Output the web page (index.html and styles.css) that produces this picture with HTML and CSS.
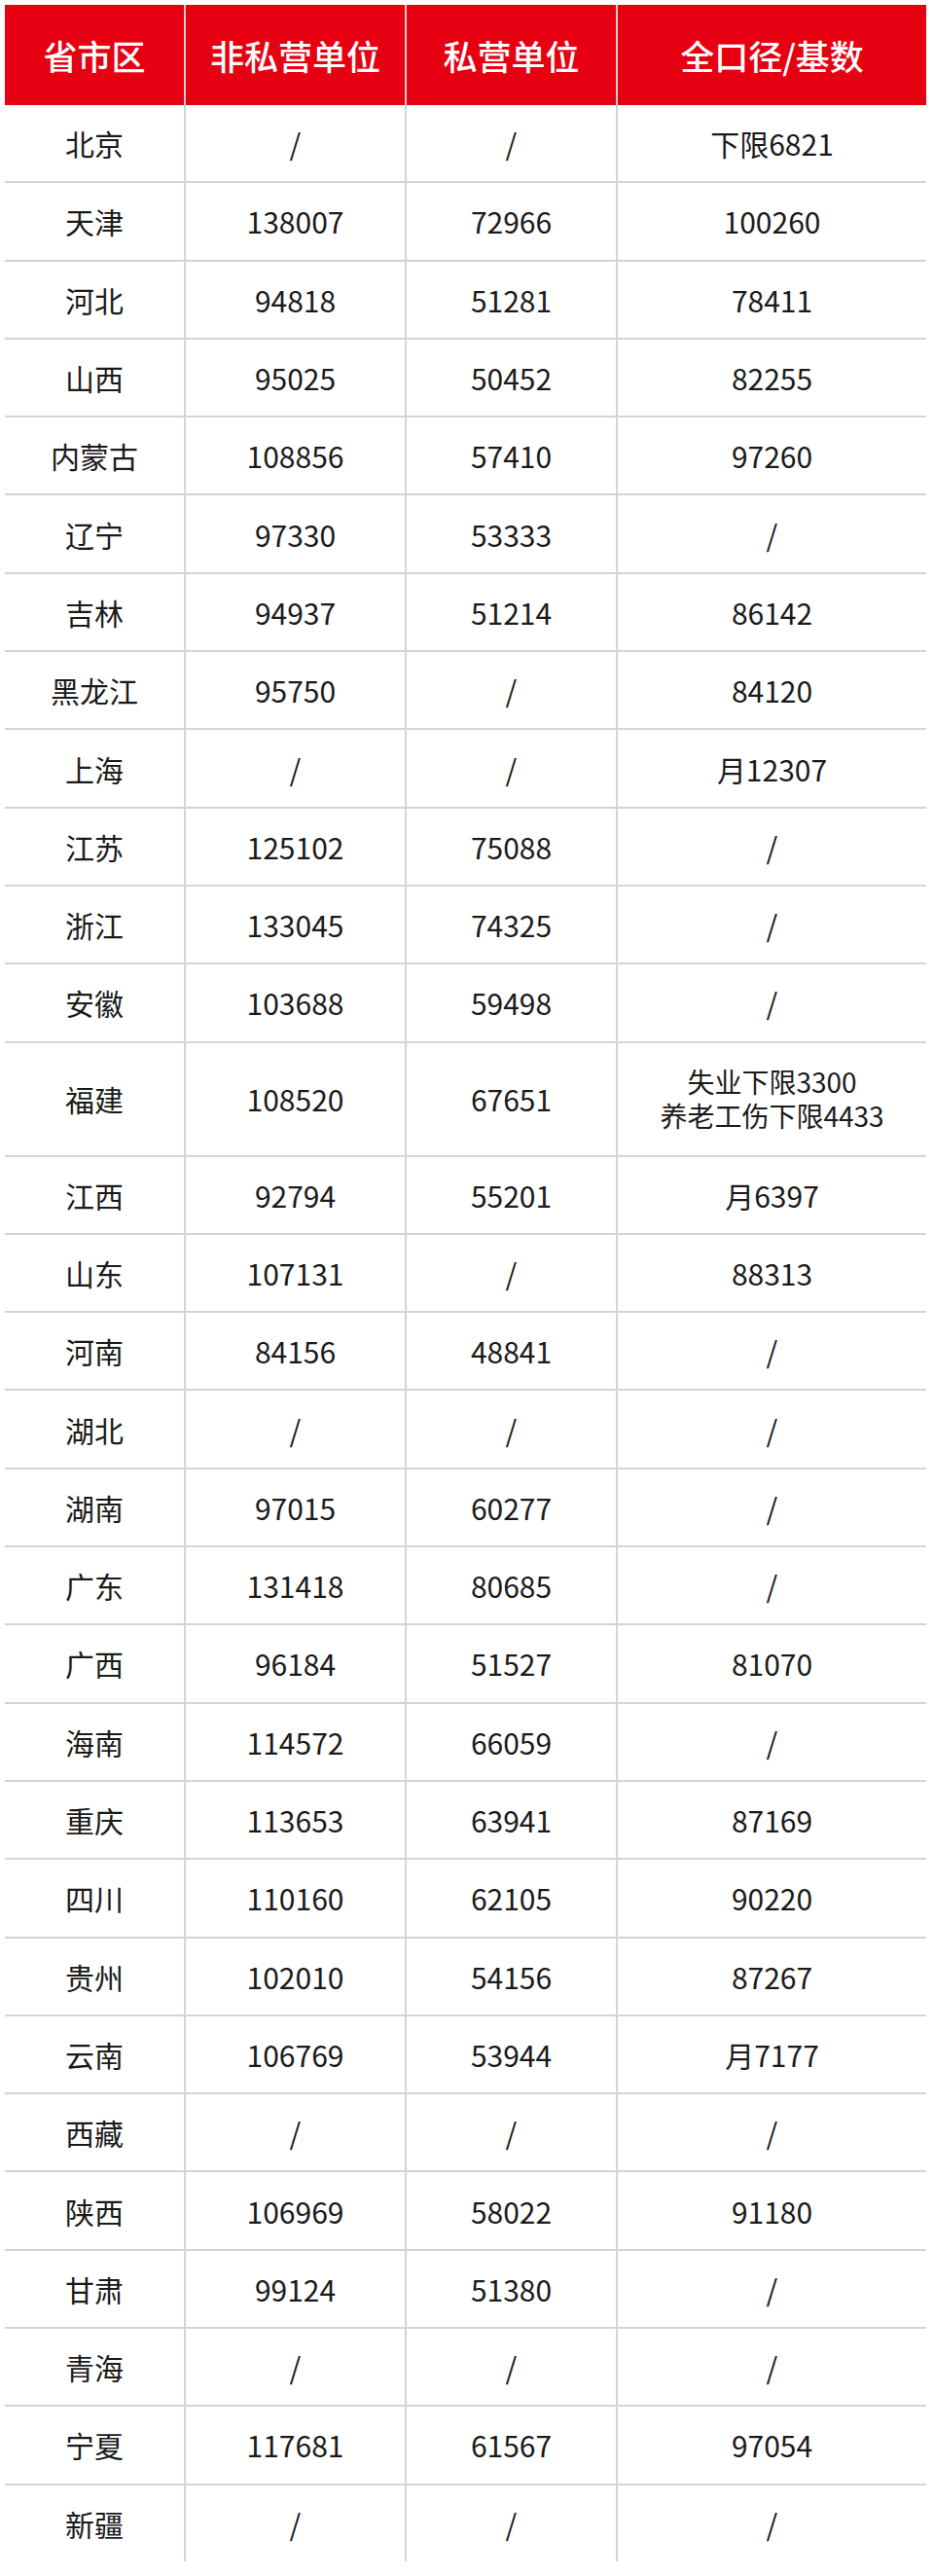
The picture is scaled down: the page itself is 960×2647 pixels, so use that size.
FILE: index.html
```html
<!DOCTYPE html>
<html lang="zh-CN">
<head>
<meta charset="utf-8">
<title>社保缴费基数</title>
<link rel="stylesheet" href="styles.css">
</head>
<body>
<div class="table">
  <div class="row head">
    <div class="cell">省市区</div>
    <div class="cell">非私营单位</div>
    <div class="cell">私营单位</div>
    <div class="cell">全口径/基数</div>
  </div>
  <div class="row"><div class="cell">北京</div><div class="cell">/</div><div class="cell">/</div><div class="cell">下限6821</div></div>
  <div class="row"><div class="cell">天津</div><div class="cell">138007</div><div class="cell">72966</div><div class="cell">100260</div></div>
  <div class="row"><div class="cell">河北</div><div class="cell">94818</div><div class="cell">51281</div><div class="cell">78411</div></div>
  <div class="row"><div class="cell">山西</div><div class="cell">95025</div><div class="cell">50452</div><div class="cell">82255</div></div>
  <div class="row"><div class="cell">内蒙古</div><div class="cell">108856</div><div class="cell">57410</div><div class="cell">97260</div></div>
  <div class="row"><div class="cell">辽宁</div><div class="cell">97330</div><div class="cell">53333</div><div class="cell">/</div></div>
  <div class="row"><div class="cell">吉林</div><div class="cell">94937</div><div class="cell">51214</div><div class="cell">86142</div></div>
  <div class="row"><div class="cell">黑龙江</div><div class="cell">95750</div><div class="cell">/</div><div class="cell">84120</div></div>
  <div class="row"><div class="cell">上海</div><div class="cell">/</div><div class="cell">/</div><div class="cell">月12307</div></div>
  <div class="row"><div class="cell">江苏</div><div class="cell">125102</div><div class="cell">75088</div><div class="cell">/</div></div>
  <div class="row"><div class="cell">浙江</div><div class="cell">133045</div><div class="cell">74325</div><div class="cell">/</div></div>
  <div class="row"><div class="cell">安徽</div><div class="cell">103688</div><div class="cell">59498</div><div class="cell">/</div></div>
  <div class="row tall"><div class="cell">福建</div><div class="cell">108520</div><div class="cell">67651</div><div class="cell multi"><span class="line">失业下限3300</span><span class="line">养老工伤下限4433</span></div></div>
  <div class="row"><div class="cell">江西</div><div class="cell">92794</div><div class="cell">55201</div><div class="cell">月6397</div></div>
  <div class="row"><div class="cell">山东</div><div class="cell">107131</div><div class="cell">/</div><div class="cell">88313</div></div>
  <div class="row"><div class="cell">河南</div><div class="cell">84156</div><div class="cell">48841</div><div class="cell">/</div></div>
  <div class="row"><div class="cell">湖北</div><div class="cell">/</div><div class="cell">/</div><div class="cell">/</div></div>
  <div class="row"><div class="cell">湖南</div><div class="cell">97015</div><div class="cell">60277</div><div class="cell">/</div></div>
  <div class="row"><div class="cell">广东</div><div class="cell">131418</div><div class="cell">80685</div><div class="cell">/</div></div>
  <div class="row"><div class="cell">广西</div><div class="cell">96184</div><div class="cell">51527</div><div class="cell">81070</div></div>
  <div class="row"><div class="cell">海南</div><div class="cell">114572</div><div class="cell">66059</div><div class="cell">/</div></div>
  <div class="row"><div class="cell">重庆</div><div class="cell">113653</div><div class="cell">63941</div><div class="cell">87169</div></div>
  <div class="row"><div class="cell">四川</div><div class="cell">110160</div><div class="cell">62105</div><div class="cell">90220</div></div>
  <div class="row"><div class="cell">贵州</div><div class="cell">102010</div><div class="cell">54156</div><div class="cell">87267</div></div>
  <div class="row"><div class="cell">云南</div><div class="cell">106769</div><div class="cell">53944</div><div class="cell">月7177</div></div>
  <div class="row"><div class="cell">西藏</div><div class="cell">/</div><div class="cell">/</div><div class="cell">/</div></div>
  <div class="row"><div class="cell">陕西</div><div class="cell">106969</div><div class="cell">58022</div><div class="cell">91180</div></div>
  <div class="row"><div class="cell">甘肃</div><div class="cell">99124</div><div class="cell">51380</div><div class="cell">/</div></div>
  <div class="row"><div class="cell">青海</div><div class="cell">/</div><div class="cell">/</div><div class="cell">/</div></div>
  <div class="row"><div class="cell">宁夏</div><div class="cell">117681</div><div class="cell">61567</div><div class="cell">97054</div></div>
  <div class="row"><div class="cell">新疆</div><div class="cell">/</div><div class="cell">/</div><div class="cell">/</div></div>
</div>
</body>
</html>
```
FILE: styles.css
```css
* { box-sizing: border-box; }
html, body { margin: 0; padding: 0; background: #ffffff; }
body {
  padding: 5px 8px 0 5px;
  font-family: "Noto Sans CJK SC", "Noto Sans", sans-serif;
  color: #1a1a1a;
}
.table { width: 947px; }
.row {
  display: grid;
  grid-template-columns: 186px 227px 217px 317px;
  height: 80.3px;
  border-bottom: 2px solid #d4d4d4;
}
.row:last-child { border-bottom: 0; height: 78.3px; }
.row.tall { height: 117px; }
.cell {
  display: flex;
  align-items: center;
  justify-content: center;
  text-align: center;
  font-size: 30px;
  line-height: 36px;
  border-right: 2px solid #d4d4d4;
}
.cell:last-child { border-right: 0; }
.cell.multi {
  flex-direction: column;
  font-size: 28px;
}
.cell.multi .line {
  display: block;
  line-height: 35px;
  height: 35px;
}
.row.head {
  height: 103px;
  border-bottom: 0;
  background: #e60012;
}
.row.head .cell {
  color: #ffffff;
  font-size: 35px;
  font-weight: 500;
  border-right-color: #eec9cb;
}
.row.head .cell:last-child { border-right: 0; }
```
